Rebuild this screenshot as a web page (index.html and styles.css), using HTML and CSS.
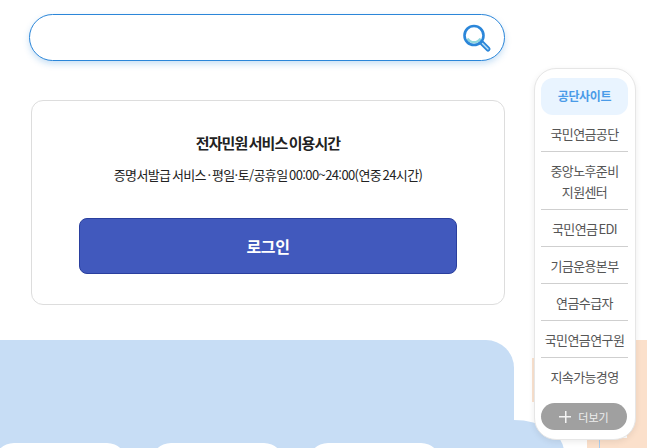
FILE: index.html
```html
<!DOCTYPE html>
<html lang="ko">
<head>
    <meta charset="UTF-8">
    <meta name="viewport" content="width=device-width, initial-scale=1.0">
    <title>전자민원 서비스</title>
    <link rel="stylesheet" href="styles.css">
</head>
<body>
    <div class="page">
        <main class="content">
            <form class="search">
                <input class="search-input" type="text" aria-label="검색">
                <button class="search-btn" type="button" aria-label="검색">
                    <svg width="30" height="30" viewBox="0 0 30 30">
                        <path d="M5.5 15.5a7.5 7.5 0 0 0 13 0" fill="none" stroke="#8fd6dc" stroke-width="2.5"/>
                        <circle cx="12" cy="12.5" r="9.5" fill="none" stroke="#2b86d9" stroke-width="2.6"/>
                        <path d="M20 20l6 6" stroke="#2b86d9" stroke-width="5" stroke-linecap="round"/>
                        <path d="M20.5 20.5l5.5 5.5" stroke="#bfe0f5" stroke-width="1.4" stroke-linecap="round"/>
                    </svg>
                </button>
            </form>

            <section class="card">
                <h2 class="card-title">전자민원 서비스 이용시간</h2>
                <p class="card-text">증명서발급 서비스 · 평일·토/공휴일 00:00~24:00(연중 24시간)</p>
                <button class="login-btn" type="button">로그인</button>
            </section>
        </main>

        <section class="bottom">
            <div class="bottom-tabs">
                <div class="bottom-tab"></div>
                <div class="bottom-tab"></div>
                <div class="bottom-tab"></div>
            </div>
        </section>
        <div class="peach"></div>
        <div class="bottom-lump"></div>

        <aside class="sites">
            <h3 class="sites-title">공단사이트</h3>
            <ul class="sites-list">
                <li>국민연금공단</li>
                <li>중앙노후준비<br>지원센터</li>
                <li>국민연금 EDI</li>
                <li>기금운용본부</li>
                <li>연금수급자</li>
                <li>국민연금연구원</li>
                <li>지속가능경영</li>
            </ul>
            <button class="more-btn" type="button"><span class="more-plus"></span>더보기</button>
        </aside>
    </div>
</body>
</html>
```

FILE: styles.css
```css
* {
    box-sizing: border-box;
}

html, body {
    margin: 0;
    padding: 0;
}

body {
    font-family: "Noto Sans CJK KR", "Noto Sans", sans-serif;
    background-color: #ffffff;
    color: #222222;
}

.page {
    position: relative;
    width: 647px;
    height: 448px;
    overflow: hidden;
}

.content {
    width: 505px;
    padding: 14px 0 0 29px;
}

.search {
    position: relative;
    height: 47px;
    border: 1px solid #2b86d9;
    border-radius: 24px;
    background-color: #fff;
    box-shadow: 0 3px 6px rgba(43, 134, 217, 0.25);
}

.search-input {
    width: 420px;
    height: 45px;
    margin-left: 20px;
    border: none;
    outline: none;
    background: none;
}

.search-btn {
    position: absolute;
    top: 8px;
    right: 12px;
    width: 30px;
    height: 30px;
    padding: 0;
    border: none;
    background: none;
}

.card {
    width: 474px;
    height: 205px;
    margin: 39px 0 0 2px;
    padding: 30px 47px 0;
    border: 1px solid #dddddd;
    border-radius: 12px;
    text-align: center;
}

.card-title {
    margin: 0;
    font-size: 15px;
    line-height: 24px;
    font-weight: 700;
    letter-spacing: -0.9px;
    word-spacing: -2px;
}

.card-text {
    margin: 9px 0 0;
    font-size: 13px;
    line-height: 22px;
    letter-spacing: -0.6px;
    word-spacing: -1.6px;
}

.login-btn {
    display: block;
    width: 378px;
    height: 56px;
    margin-top: 32px;
    border: 1px solid #2a3f9e;
    border-radius: 8px;
    background-color: #4159bd;
    color: #ffffff;
    font-family: inherit;
    font-size: 16px;
    font-weight: 700;
    letter-spacing: -0.4px;
}

.bottom {
    position: absolute;
    left: 0;
    top: 340px;
    width: 514px;
    height: 108px;
    background-color: #c7ddf5;
    border-top-right-radius: 28px;
}

.bottom-tabs {
    display: flex;
    gap: 24px;
    margin: 103px 0 0 -6px;
}

.bottom-tab {
    width: 133px;
    height: 40px;
    border-radius: 20px;
    background-color: #ffffff;
}

.bottom-lump {
    position: absolute;
    left: 480px;
    top: 420px;
    width: 84px;
    height: 60px;
    border-top-right-radius: 50px 32px;
    background-color: #c7ddf5;
}

.peach {
    position: absolute;
    left: 532px;
    top: 340px;
    width: 115px;
    height: 108px;
    background: linear-gradient(#fbe3cf, #fbe3cf) no-repeat 0 18px / 20px 44px,
        linear-gradient(#fbe0cb, #fbe0cb) no-repeat 100% 0 / 20px 100%,
        linear-gradient(#a9cdf0, #a9cdf0) no-repeat 67px 100% / 1px 10px,
        linear-gradient(#fbe0cb, #fbe0cb) no-repeat 100% 100% / 60px 10px;
}

.sites {
    position: absolute;
    left: 534px;
    top: 68px;
    width: 102px;
    height: 372px;
    padding: 9px 7px 0 6px;
    border: 1px solid #e6e6e6;
    border-radius: 22px;
    background-color: #ffffff;
    box-shadow: 0 2px 6px rgba(0, 0, 0, 0.08);
    text-align: center;
}

.sites-title {
    margin: 0;
    height: 37px;
    border-radius: 12px;
    background-color: #e9f4ff;
    color: #4a9be8;
    font-size: 12px;
    line-height: 36px;
    font-weight: 700;
    letter-spacing: -0.3px;
}

.sites-list {
    margin: 0 -1px;
    padding: 0;
    list-style: none;
}

.sites-list li {
    margin: 0 1px;
    padding: 8px 0 7px;
    border-bottom: 1px solid #cfcfcf;
    color: #555555;
    font-size: 13px;
    line-height: 21px;
    letter-spacing: -0.6px;
    word-spacing: -2px;
    white-space: nowrap;
}

.sites-list li:last-child {
    border-bottom: none;
}

.more-btn {
    display: flex;
    align-items: center;
    justify-content: center;
    gap: 7px;
    width: 86px;
    height: 27px;
    margin: 9px 0 0 0;
    padding: 0;
    border: none;
    border-radius: 14px;
    background-color: #a0a0a0;
    color: #eeeeee;
    font-family: inherit;
    font-size: 11px;
}

.more-plus {
    width: 12px;
    height: 12px;
    background: linear-gradient(#f4f4f4, #f4f4f4) no-repeat center / 12px 1.5px,
        linear-gradient(#f4f4f4, #f4f4f4) no-repeat center / 1.5px 12px;
}
```
